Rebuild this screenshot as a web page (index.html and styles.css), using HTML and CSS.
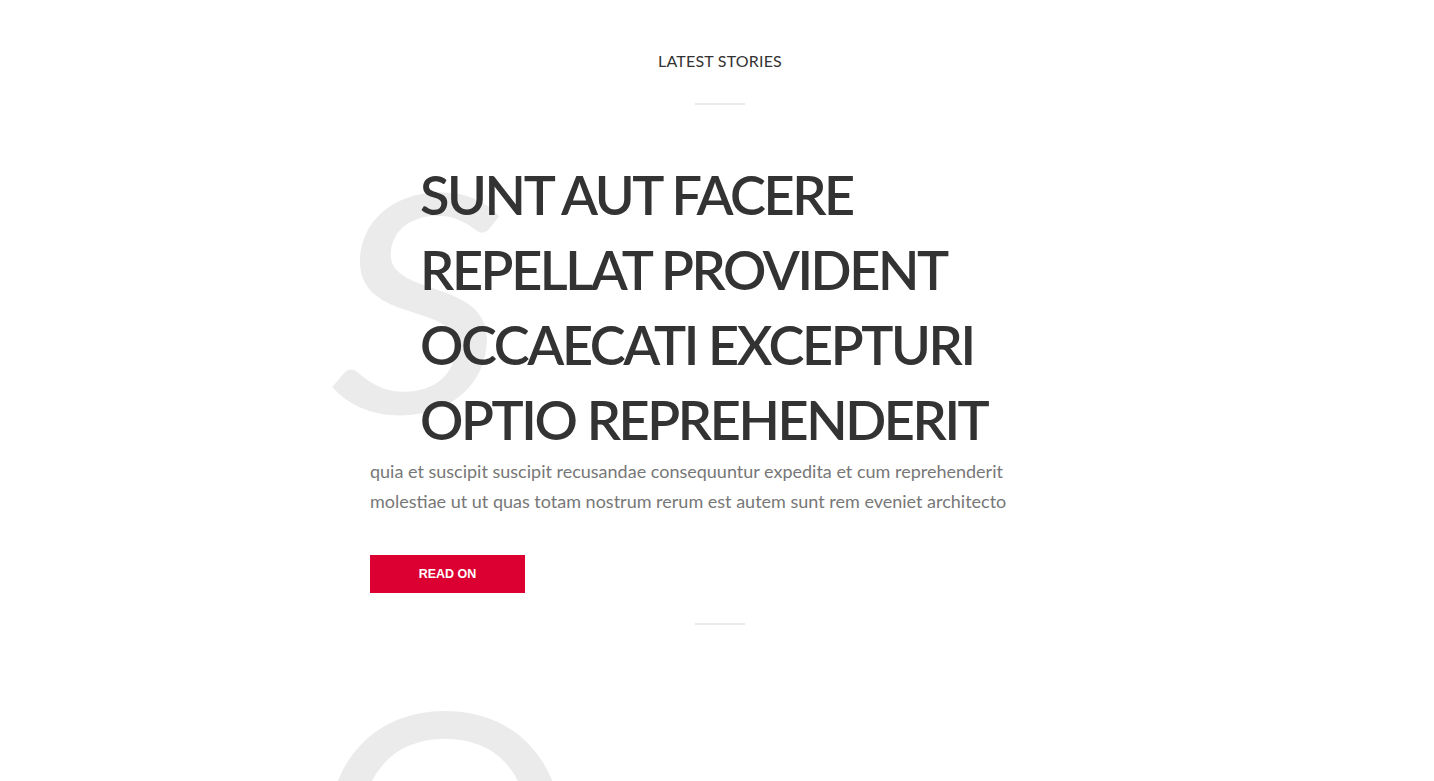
FILE: index.html
```html
<!DOCTYPE html>
<html lang="en">
<head>
<meta charset="utf-8">
<title>Latest Stories</title>
<link rel="stylesheet" href="styles.css">
</head>
<body>
<main class="stories">
  <header class="stories-head">
    <h2 class="stories-title">LATEST STORIES</h2>
    <hr class="divider">
  </header>
  <article class="story">
    <span class="story-letter story-letter-s" aria-hidden="true">S</span>
    <h1 class="story-title">SUNT AUT FACERE REPELLAT PROVIDENT OCCAECATI EXCEPTURI OPTIO REPREHENDERIT</h1>
    <p class="story-excerpt">quia et suscipit suscipit recusandae consequuntur expedita et cum reprehenderit molestiae ut ut quas totam nostrum rerum est autem sunt rem eveniet architecto</p>
    <a class="btn" href="#">READ ON</a>
  </article>
  <hr class="divider divider-after">
  <article class="story story-next">
    <span class="story-letter story-letter-o" aria-hidden="true">O</span>
  </article>
</main>
</body>
</html>
```
FILE: styles.css
```css
html, body {
  margin: 0;
  padding: 0;
  background: #fff;
}
body {
  font-family: "Lato", "Open Sans", sans-serif;
  color: #333;
  overflow: hidden;
  height: 781px;
}
.stories {
  width: 700px;
  margin: 0 auto;
  padding-top: 50px;
  transform: translateX(3px);
}
.stories-head {
  display: flex;
  flex-direction: column;
  align-items: center;
}
.stories-title {
  margin: 0;
  font-size: 16px;
  font-weight: 400;
  line-height: 22px;
  letter-spacing: 0.2px;
  color: #333;
}
.divider {
  width: 50px;
  height: 2px;
  border: 0;
  background: #ebebeb;
  margin: 31px auto 0;
}
.story {
  position: relative;
  padding-top: 52px;
}
.story-letter {
  position: absolute;
  font-family: "Lato", sans-serif;
  font-size: 305px;
  line-height: 1;
  color: #ebebeb;
  z-index: 0;
  user-select: none;
}
.story-letter-s {
  left: -40px;
  top: 38px;
  font-style: italic;
  transform: scaleX(1.13);
  transform-origin: left center;
}
.story-title {
  position: relative;
  z-index: 1;
  margin: 0;
  padding-left: 50px;
  font-size: 54px;
  font-weight: 600;
  line-height: 75px;
  letter-spacing: -2.4px;
  color: #333;
  width: 600px;
}
.story-excerpt {
  position: relative;
  z-index: 1;
  margin: -1px 0 0;
  max-width: 650px;
  font-size: 18px;
  line-height: 30px;
  color: #777;
}
.btn {
  position: relative;
  z-index: 1;
  display: inline-flex;
  align-items: center;
  justify-content: center;
  margin-top: 39px;
  width: 155px;
  height: 38px;
  background: #dc0032;
  color: #fff;
  font-family: "Liberation Sans", Arial, sans-serif;
  font-weight: 700;
  font-size: 12.5px;
  text-decoration: none;
}
.divider-after {
  margin-top: 30px;
}
.story-next {
  height: 160px;
}
.story-letter-o {
  top: 32px;
  left: -57px;
  font-size: 330px;
}
```
